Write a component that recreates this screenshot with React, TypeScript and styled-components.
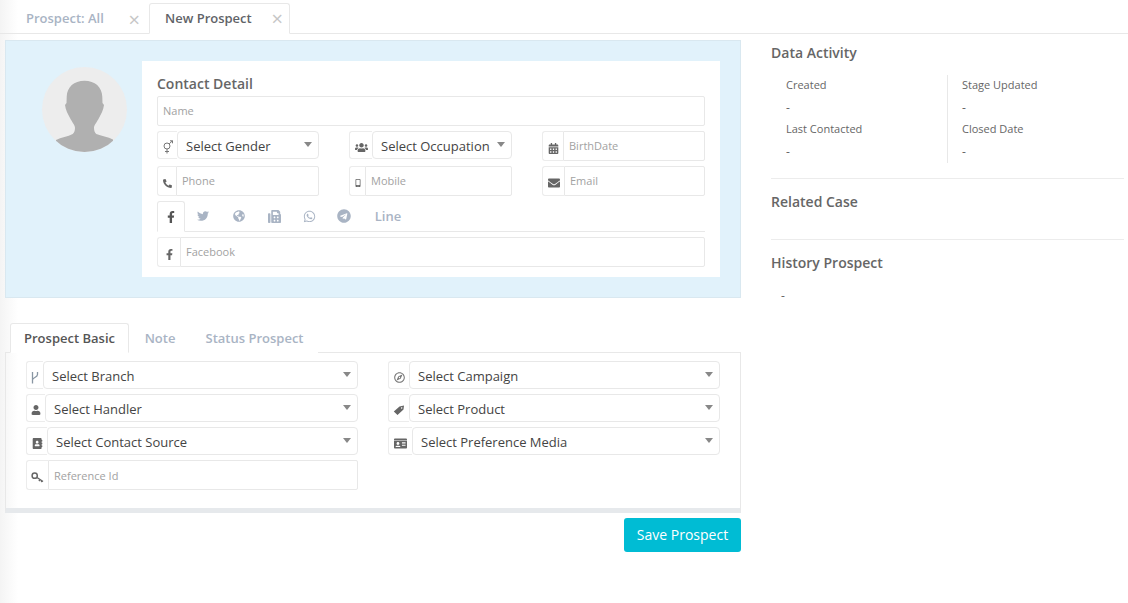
import React from 'react';
import styled, { createGlobalStyle } from 'styled-components';
import {
  FaFacebookF,
  FaTwitter,
  FaGlobeAmericas,
  FaFax,
  FaWhatsapp,
  FaTelegram,
  FaUsers,
  FaCalendarAlt,
  FaPhoneAlt,
  FaMobileAlt,
  FaEnvelope,
  FaUser,
  FaAddressBook,
  FaIdCard,
  FaRegCompass,
} from 'react-icons/fa';

const GlobalStyle = createGlobalStyle`
  html, body {
    margin: 0;
    padding: 0;
    background: #fff;
  }
  body {
    font-family: "Open Sans", "Liberation Sans", sans-serif;
    color: #555;
  }
  * {
    box-sizing: border-box;
  }
`;

const Page = styled.div`
  width: 1128px;
  height: 603px;
  overflow: hidden;
  background: linear-gradient(to right, #f4f4f4 0, #fff 18px);
`;

const TabBar = styled.div`
  display: flex;
  height: 34px;
  padding: 3px 0 0 11px;
  border-bottom: 1px solid #e8e8e8;
`;

const PageTab = styled.div<{ $active?: boolean }>`
  display: flex;
  align-items: center;
  justify-content: space-between;
  height: 31px;
  width: ${(p) => (p.$active ? '141px' : '138px')};
  padding: 0 ${(p) => (p.$active ? '6px' : '8px')} 2px ${(p) => (p.$active ? '15px' : '14px')};
  font-size: 13px;
  font-weight: 600;
  color: ${(p) => (p.$active ? '#5f6368' : '#a9b4c4')};
  background: ${(p) => (p.$active ? '#fff' : 'transparent')};
  border: 1px solid ${(p) => (p.$active ? '#e8e8e8' : 'transparent')};
  border-bottom: ${(p) => (p.$active ? '1px solid #fff' : 'none')};
  border-radius: 3px 3px 0 0;
`;

const CloseMark = styled.span`
  font-size: 20px;
  font-weight: 400;
  color: #c6c6c6;
  line-height: 1;
  margin-top: 3px;
`;

const Body = styled.div`
  display: flex;
  padding: 6px 4px 0 5px;
`;

const LeftColumn = styled.div`
  width: 736px;
`;

const RightColumn = styled.div`
  width: 353px;
  margin-left: 30px;
`;

const BluePanel = styled.div`
  display: flex;
  height: 258px;
  padding: 20px 20px 20px 36px;
  background: #e1f2fb;
  border: 1px solid #d9e8f0;
`;

const Avatar = styled.div`
  width: 85px;
  height: 85px;
  margin: 6px 15px 0 0;
  border-radius: 50%;
  background: #ededed;
  overflow: hidden;
  flex-shrink: 0;
`;

const ContactCard = styled.div`
  flex: 1;
  padding: 15px;
  background: #fff;
`;

const CardTitle = styled.div`
  margin-bottom: 4px;
  font-size: 14px;
  font-weight: 600;
  line-height: 16px;
  color: #666;
`;

const FieldGrid = styled.div`
  display: grid;
  grid-template-columns: 162px 163px 163px;
  gap: 5px 30px;
  align-items: start;
  margin-top: 5px;
`;

const InputGroup = styled.div`
  display: flex;
  height: 30px;
`;

const SelectGroup = styled.div`
  display: flex;
  height: 28px;
`;

const Addon = styled.div<{ $w: number; $tone?: string }>`
  display: flex;
  align-items: center;
  justify-content: center;
  width: ${(p) => p.$w}px;
  flex-shrink: 0;
  padding-top: 4px;
  font-size: 11px;
  color: ${(p) => p.$tone ?? '#666'};
  background: #fff;
  border: 1px solid #ececec;
  border-right: none;
  border-radius: 3px 0 0 3px;
`;

const InputBox = styled.div`
  flex: 1;
  display: flex;
  align-items: center;
  padding: 0 0 2px 5px;
  font-size: 11px;
  color: #a2a2a2;
  border: 1px solid #e8e8e8;
  border-radius: 0 2px 2px 0;
`;

const NameInput = styled(InputBox)`
  height: 30px;
  border-radius: 2px;
`;

const ReferenceInput = styled(InputBox)`
  padding-bottom: 0;
`;

const SelectBox = styled.div`
  flex: 1;
  display: flex;
  align-items: center;
  justify-content: space-between;
  padding: 2px 6px 0 8px;
  font-size: 13px;
  color: #444;
  background: #fff;
  border: 1px solid #e8e8e8;
  border-radius: 4px;
`;

const Caret = styled.span`
  width: 0;
  height: 0;
  margin-top: -3px;
  border-left: 4px solid transparent;
  border-right: 4px solid transparent;
  border-top: 5px solid #888;
`;

const SocialTabs = styled.div`
  display: flex;
  height: 31px;
  margin-top: 5px;
  border-bottom: 1px solid #e8e8e8;
`;

const SocialTab = styled.div<{ $active?: boolean; $w: number }>`
  display: flex;
  align-items: center;
  justify-content: center;
  width: ${(p) => p.$w}px;
  height: ${(p) => (p.$active ? '31px' : '30px')};
  font-size: 13px;
  font-weight: 600;
  color: ${(p) => (p.$active ? '#555' : '#a9b4c4')};
  background: #fff;
  border: ${(p) => (p.$active ? '1px solid #e8e8e8' : 'none')};
  border-bottom: ${(p) => (p.$active ? '1px solid #fff' : 'none')};
  border-radius: 3px 3px 0 0;
`;

const FacebookRow = styled(InputGroup)`
  margin-top: 5px;
`;

const FormTabs = styled.div`
  display: flex;
  height: 30px;
  margin-top: 25px;
  padding-left: 5px;
`;

const FormTab = styled.div<{ $active?: boolean; $w: number }>`
  display: flex;
  align-items: center;
  justify-content: center;
  width: ${(p) => p.$w}px;
  height: 30px;
  font-size: 13px;
  font-weight: 600;
  color: ${(p) => (p.$active ? '#555' : '#a9b4c4')};
  background: #fff;
  border: ${(p) => (p.$active ? '1px solid #e8e8e8' : 'none')};
  border-bottom: ${(p) => (p.$active ? '1px solid #fff' : 'none')};
  border-radius: 3px 3px 0 0;
  position: relative;
  z-index: 1;
`;

const FormPanel = styled.div`
  height: 161px;
  margin-top: -1px;
  padding: 8px 20px 0 20px;
  border: 1px solid #e8e8e8;
  border-bottom: 5px solid #e6e9ec;
`;

const FormGrid = styled.div`
  display: grid;
  grid-template-columns: 332px 332px;
  column-gap: 30px;
`;

const FormColumn = styled.div`
  display: flex;
  flex-direction: column;
  gap: 5px;
`;

const SaveRow = styled.div`
  display: flex;
  justify-content: flex-end;
  margin-top: 5px;
`;

const SaveButton = styled.button`
  width: 117px;
  height: 34px;
  padding: 0 0 2px;
  font-family: inherit;
  font-size: 14px;
  color: #fff;
  background: #00bcd4;
  border: none;
  border-radius: 3px;
`;

const SideTitle = styled.div`
  font-size: 14px;
  font-weight: 600;
  line-height: 20px;
  color: #666;
`;

const ActivityBlock = styled.div`
  height: 139px;
  padding-top: 3px;
  border-bottom: 1px solid #ececec;
`;

const ActivityGrid = styled.div`
  display: grid;
  grid-template-columns: 176px 1fr;
  height: 87px;
  margin-top: 12px;
`;

const ActivityColumn = styled.div<{ $divider?: boolean }>`
  padding-left: ${(p) => (p.$divider ? '14px' : '15px')};
  border-left: ${(p) => (p.$divider ? '1px solid #e8e8e8' : 'none')};
`;

const ActivityLabel = styled.div`
  height: 22px;
  font-size: 11px;
  line-height: 20px;
  color: #666;
`;

const ActivityValue = styled.div`
  height: 22px;
  font-size: 12px;
  line-height: 22px;
  color: #666;
`;

const RelatedBlock = styled.div`
  height: 61px;
  padding-top: 13px;
  border-bottom: 1px solid #ececec;
`;

const HistoryBlock = styled.div`
  padding-top: 13px;
`;

const HistoryValue = styled.div`
  margin: 13px 0 0 10px;
  font-size: 12px;
  line-height: 20px;
  color: #666;
`;

const AvatarIcon = () => (
  <svg width="85" height="85" viewBox="0 0 85 85">
    <path
      d="M42.500 13.700C32 13.700 25 20 24.700 29.700L24.500 36L23 38C23.500 43 26 47 28 51C30 55 33 58 33 61C33 64 32 66 30.700 67C26 69.500 19 70.500 14 73L14 85L71 85L71 72.500C66 70 59 69 54.300 67C53 66 52 64 52 61C52 58 55 55 57 51C59 47 61.500 43 62 38L60.500 36L60.300 29.700C60 20 53 13.700 42.500 13.700Z"
      fill="#b0b0b0"
    />
  </svg>
);

const GenderIcon = () => (
  <svg width="12" height="14" viewBox="0 0 12 14" fill="none" stroke="#777" strokeWidth="1">
    <circle cx="5" cy="6" r="3" />
    <path d="M7.200 3.800L10.500 .8M8 .8h2.500v2.500M5 9v4.500M3 11.500h4" />
  </svg>
);

const BranchIcon = () => (
  <svg width="10" height="13" viewBox="0 0 10 13" fill="none" stroke="#8996a3" strokeWidth="1.300">
    <path d="M2.500 1V12.500M7.500 1V3.500C7.500 6.500 2.500 6.500 2.500 9" />
  </svg>
);

const KeyIcon = () => (
  <svg width="13" height="11" viewBox="0 0 13 11" fill="none" stroke="#666" strokeWidth="1.500">
    <circle cx="3.700" cy="3.700" r="2.600" />
    <path d="M6 5.500L12 9.500M9 7.500L8 9M11 8.800L10.300 10" />
  </svg>
);

const TagIcon = () => (
  <svg width="12" height="12" viewBox="0 0 12 12">
    <path
      d="M.8 7.500L6.500 2.500L11 1.500L10.500 5.500L4.500 11ZM8.700 3.300a.7.7 0 1 0 .01 0Z"
      fill="#666"
      fillRule="evenodd"
    />
  </svg>
);

const App: React.FC = () => (
  <Page>
    <GlobalStyle />
    <TabBar>
      <PageTab>
        Prospect: All
        <CloseMark>×</CloseMark>
      </PageTab>
      <PageTab $active>
        New Prospect
        <CloseMark>×</CloseMark>
      </PageTab>
    </TabBar>
    <Body>
      <LeftColumn>
        <BluePanel>
          <Avatar>
            <AvatarIcon />
          </Avatar>
          <ContactCard>
            <CardTitle>Contact Detail</CardTitle>
            <NameInput>Name</NameInput>
            <FieldGrid>
              <SelectGroup>
                <Addon $w={20}><GenderIcon /></Addon>
                <SelectBox>Select Gender<Caret /></SelectBox>
              </SelectGroup>
              <SelectGroup>
                <Addon $w={23}><FaUsers size={13} /></Addon>
                <SelectBox>Select Occupation<Caret /></SelectBox>
              </SelectGroup>
              <InputGroup>
                <Addon $w={21}><FaCalendarAlt /></Addon>
                <InputBox>BirthDate</InputBox>
              </InputGroup>
              <InputGroup>
                <Addon $w={19}><FaPhoneAlt size={9} /></Addon>
                <InputBox>Phone</InputBox>
              </InputGroup>
              <InputGroup>
                <Addon $w={16}><FaMobileAlt size={8} /></Addon>
                <InputBox>Mobile</InputBox>
              </InputGroup>
              <InputGroup>
                <Addon $w={22}><FaEnvelope size={12} /></Addon>
                <InputBox>Email</InputBox>
              </InputGroup>
            </FieldGrid>
            <SocialTabs>
              <SocialTab $active $w={28}><FaFacebookF size={12} color="#555" /></SocialTab>
              <SocialTab $w={36}><FaTwitter size={12} /></SocialTab>
              <SocialTab $w={35}><FaGlobeAmericas size={12} /></SocialTab>
              <SocialTab $w={36}><FaFax size={13} /></SocialTab>
              <SocialTab $w={35}><FaWhatsapp size={13} /></SocialTab>
              <SocialTab $w={34}><FaTelegram size={14} /></SocialTab>
              <SocialTab $w={54}>Line</SocialTab>
            </SocialTabs>
            <FacebookRow>
              <Addon $w={23}><FaFacebookF size={11} /></Addon>
              <InputBox>Facebook</InputBox>
            </FacebookRow>
          </ContactCard>
        </BluePanel>
        <FormTabs>
          <FormTab $active $w={119}>Prospect Basic</FormTab>
          <FormTab $w={62}>Note</FormTab>
          <FormTab $w={127}>Status Prospect</FormTab>
        </FormTabs>
        <FormPanel>
          <FormGrid>
            <FormColumn>
              <SelectGroup>
                <Addon $w={17}><BranchIcon /></Addon>
                <SelectBox>Select Branch<Caret /></SelectBox>
              </SelectGroup>
              <SelectGroup>
                <Addon $w={19}><FaUser size={10} /></Addon>
                <SelectBox>Select Handler<Caret /></SelectBox>
              </SelectGroup>
              <SelectGroup>
                <Addon $w={21}><FaAddressBook size={11} /></Addon>
                <SelectBox>Select Contact Source<Caret /></SelectBox>
              </SelectGroup>
              <InputGroup>
                <Addon $w={22}><KeyIcon /></Addon>
                <ReferenceInput>Reference Id</ReferenceInput>
              </InputGroup>
            </FormColumn>
            <FormColumn>
              <SelectGroup>
                <Addon $w={21} $tone="#777"><FaRegCompass size={11} /></Addon>
                <SelectBox>Select Campaign<Caret /></SelectBox>
              </SelectGroup>
              <SelectGroup>
                <Addon $w={21}><TagIcon /></Addon>
                <SelectBox>Select Product<Caret /></SelectBox>
              </SelectGroup>
              <SelectGroup>
                <Addon $w={24}><FaIdCard size={13} /></Addon>
                <SelectBox>Select Preference Media<Caret /></SelectBox>
              </SelectGroup>
            </FormColumn>
          </FormGrid>
        </FormPanel>
        <SaveRow>
          <SaveButton>Save Prospect</SaveButton>
        </SaveRow>
      </LeftColumn>
      <RightColumn>
        <ActivityBlock>
          <SideTitle>Data Activity</SideTitle>
          <ActivityGrid>
            <ActivityColumn>
              <ActivityLabel>Created</ActivityLabel>
              <ActivityValue>-</ActivityValue>
              <ActivityLabel>Last Contacted</ActivityLabel>
              <ActivityValue>-</ActivityValue>
            </ActivityColumn>
            <ActivityColumn $divider>
              <ActivityLabel>Stage Updated</ActivityLabel>
              <ActivityValue>-</ActivityValue>
              <ActivityLabel>Closed Date</ActivityLabel>
              <ActivityValue>-</ActivityValue>
            </ActivityColumn>
          </ActivityGrid>
        </ActivityBlock>
        <RelatedBlock>
          <SideTitle>Related Case</SideTitle>
        </RelatedBlock>
        <HistoryBlock>
          <SideTitle>History Prospect</SideTitle>
          <HistoryValue>-</HistoryValue>
        </HistoryBlock>
      </RightColumn>
    </Body>
  </Page>
);

export default App;
